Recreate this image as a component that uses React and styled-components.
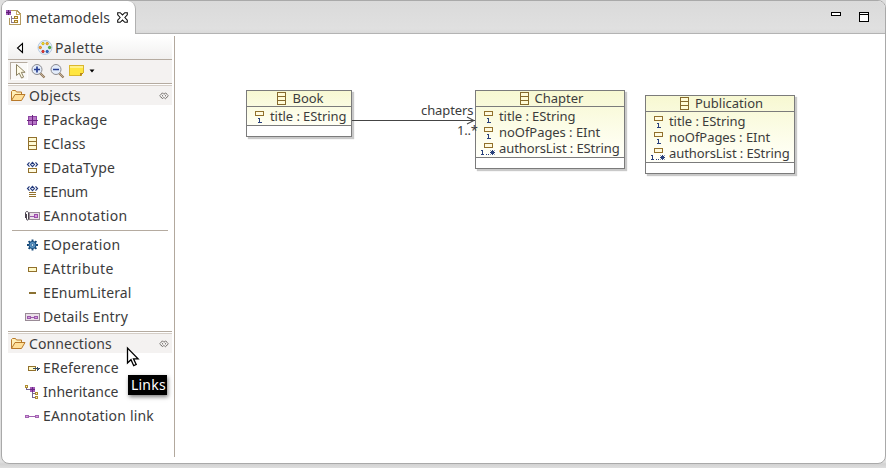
import React from "react";
import styled, { createGlobalStyle } from "styled-components";

const Global = createGlobalStyle`
  * { box-sizing: border-box; }
  body { margin: 0; background: #dedede; overflow: hidden; font-family: "Noto Sans", "Open Sans", sans-serif; color: #3c3c3c; }
  svg { display: block; flex: none; }
`;
const Page = styled.div`
  width: 886px;
  height: 468px;
  padding-left: 1px;
  background: linear-gradient(#dfdfdf 0, #dfdfdf 462px, #d2d2d2 464px, #dedede 468px);
`;
const Frame = styled.div`
  height: 464px;
  display: flex;
  flex-direction: column;
  background: #fff;
  border: 1px solid #a9a9a9;
  border-radius: 8px;
  overflow: hidden;
`;
const TabBar = styled.div`
  height: 33px;
  flex: none;
  display: flex;
  background: linear-gradient(#dadada, #e0e0e0 85%, #d8d8d8);
`;
const Tab = styled.div`
  width: 134px;
  height: 33px;
  display: flex;
  align-items: center;
  padding: 0 0 0 4px;
  background: #fff;
  border-right: 1px solid #b0b0b0;
  border-top-right-radius: 8px;
`;
const BarRest = styled.div`
  flex: 1;
  display: flex;
  justify-content: flex-end;
  gap: 18px;
  padding: 11px 16px 0 0;
  border-bottom: 1px solid #b3b3b3;
`;
const Label = styled.span`
  font-size: ${(p) => p.$size || 14}px;
  line-height: ${(p) => p.$lh || 20}px;
  letter-spacing: ${(p) => p.$ls || 0}px;
  white-space: pre;
`;
const TabLabel = styled(Label)`
  width: 95px;
  padding-left: 4px;
`;
const Body = styled.div`
  flex: 1;
  display: flex;
`;
const Palette = styled.aside`
  width: 169px;
  height: 421px;
  margin: 2px 0 0 4px;
  padding: 0 2px 0 2px;
  border-right: 1px solid #b2a89d;
`;
const PaletteHead = styled.div`
  height: 24px;
  display: flex;
  align-items: center;
  gap: 8px;
  padding-left: 5px;
  background: linear-gradient(#fff, #f1f0ef);
  border-bottom: 1px solid #b5aba0;
`;
const HeadTitle = styled.div`
  display: flex;
  align-items: center;
  gap: 2px;
`;
const Toolbar = styled.div`
  height: 24px;
  display: flex;
  align-items: center;
  background: #f4f2f1;
  border-bottom: 1px solid #b5aba0;
  padding: 0 0 1px 2px;
`;
const Tool = styled.div`
  width: ${(p) => p.$w}px;
  height: 18px;
  display: flex;
  align-items: center;
  justify-content: center;
  ${(p) => p.$pressed && `
    background: #faf9f8;
    border: 1px solid #b5aba0;
    border-right-color: #fff;
    border-bottom-color: #fff;
  `}
`;
const DrawerHead = styled.div`
  height: ${(p) => (p.$ruled ? 22 : 21)}px;
  display: flex;
  align-items: center;
  background: #f4f2f1;
  border-top: ${(p) => (p.$ruled ? "1px solid #b5aba0" : "0")};
  box-shadow: inset 0 1px #fff, inset 0 2px #d5cec7;
  padding: 2px 3px 0 2px;
  margin-top: ${(p) => p.$gap || 0}px;
`;
const DrawerLabel = styled(Label)`
  flex: 1;
  padding-left: 3px;
`;
const Items = styled.div`
  padding-top: ${(p) => p.$top}px;
`;
const Item = styled.div`
  height: 24px;
  display: flex;
  align-items: center;
  padding-left: 16px;
`;
const IconCell = styled.div`
  width: 16px;
  margin-right: 3px;
`;
const Rule = styled.div`
  height: 1px;
  background: #b5aba0;
  margin: 2px 4px 2px 4px;
`;
const Canvas = styled.main`
  flex: 1;
  position: relative;
`;
const Node = styled.section`
  position: absolute;
  left: ${(p) => p.$x}px;
  top: ${(p) => p.$y}px;
  width: ${(p) => p.$w}px;
  height: ${(p) => p.$h}px;
  display: flex;
  flex-direction: column;
  border: 1px solid #7b7b7b;
  background: linear-gradient(#f7f8d2, #fffff4 75%, #fff);
  box-shadow: 2px 2px 1px #c9c9c9;
`;
const NodeHead = styled.header`
  height: 16px;
  flex: none;
  display: flex;
  align-items: center;
  justify-content: center;
  gap: 6px;
  padding-left: 3px;
  border-bottom: 1px solid #7b7b7b;
`;
const NodeName = styled(Label)`
  margin-top: -1px;
`;
const Attrs = styled.div`
  flex: 1;
  padding: 1px 0 0 4px;
`;
const Attr = styled.div`
  height: 16px;
  display: flex;
  align-items: center;
  gap: 3px;
`;
const Ops = styled.footer`
  height: 11px;
  border-top: 1px solid #7b7b7b;
  background: #fff;
`;
const Edge = styled.svg`
  position: absolute;
  left: 177px;
  top: 79px;
`;
const EdgeLabel = styled(Label)`
  position: absolute;
  left: ${(p) => p.$x}px;
  top: ${(p) => p.$y}px;
`;
const Pointer = styled.svg`
  position: absolute;
  left: 126px;
  top: 346px;
`;
const Tip = styled.div`
  position: absolute;
  left: 128px;
  top: 375px;
  width: 39px;
  height: 20px;
  display: flex;
  align-items: center;
  padding: 0 0 1px 3px;
  background: #000;
  color: #fff;
  box-shadow: 1px 2px 4px rgba(0, 0, 0, 0.5);
`;

const Svg = ({ w = 16, h = 16, smooth, children }) => (
  <svg width={w} height={h} viewBox={`0 0 ${w} ${h}`} fill="none" shapeRendering={smooth ? "auto" : "crispEdges"}>{children}</svg>
);
const DocIcon = () => (
  <Svg>
    <path d="M5 .5h6l3 3v11h-11v-7" fill="#fff" stroke="#b39a62" />
    <path d="M10.500 .5v4h4" stroke="#c7a961" />
    <path d="M5.500 6v6.500h3M5.500 8.500h3" stroke="#8b7b91" />
    <rect x="8.500" y="6.500" width="3" height="2" fill="#fff2bb" stroke="#a77f27" />
    <rect x="8.500" y="10.500" width="3" height="2" fill="#fff2bb" stroke="#a77f27" />
    <rect x="0" y="0" width="5" height="5" fill="#a35bb8" />
    <path d="M0 2.500h5M2.500 0v5" stroke="#5e1f78" />
  </Svg>
);
const CloseIcon = () => (
  <Svg w={11} h={11} smooth>
    <path d="M.7.7H3.200L5.500 3 7.800.7h2.500v2.200L7.900 5.500l2.400 2.600v2.200H7.800L5.500 8l-2.300 2.300H.7V8.100l2.400-2.600L.7 2.900Z" stroke="#111" strokeWidth="1.100" />
  </Svg>
);
const MinIcon = () => <Svg w={10} h={4}><rect x=".5" y=".5" width="9" height="3" fill="#fff" stroke="#000" /></Svg>;
const MaxIcon = () => <Svg w={10} h={10}><path d="M.5.5h9v9h-9zM1 2.500h8" fill="#fff" stroke="#000" /></Svg>;
const BackIcon = () => <Svg w={16} h={14} smooth><path d="M9.500 2.500v9L4.500 7Z" fill="#fff" stroke="#000" strokeWidth="1.100" /></Svg>;
const PaletteIcon = () => (
  <Svg smooth>
    <circle cx="8" cy="7.500" r="7" fill="#e3edf8" stroke="#b7cbe0" />
    <g strokeWidth=".7">
      <circle cx="6" cy="3.600" r="1.200" fill="#ffe82c" stroke="#bca000" />
      <circle cx="10.200" cy="3.600" r="1.200" fill="#f6bc31" stroke="#c27b00" />
      <circle cx="3.300" cy="7.500" r="1.200" fill="#ffa52a" stroke="#c66d00" />
      <circle cx="12.600" cy="7.500" r="1.200" fill="#62bf38" stroke="#27831b" />
      <circle cx="6" cy="11.500" r="1.200" fill="#ef4037" stroke="#ad1917" />
      <circle cx="10.200" cy="11.500" r="1.200" fill="#326cce" stroke="#174391" />
    </g>
  </Svg>
);
const SelectIcon = () => (
  <Svg w={14} smooth>
    <path d="M4.500 1.500v11l2.700-2.400 2.400 5 2-1-2.300-4.800h3.800Z" fill="#fffbe7" stroke="#8b8162" strokeWidth="1" />
  </Svg>
);
const ZoomIcon = ({ plus }) => (
  <Svg smooth>
    <path d="m10 10 4.500 4.500" stroke="#8d7458" strokeWidth="2.200" />
    <path d="m10 10 4.500 4.500" stroke="#d1bea2" strokeWidth=".8" />
    <circle cx="7" cy="6.500" r="5" fill="#e3ecfa" stroke="#8c8b90" />
    <path d={plus ? "M4 6.500h6M7 3.500v6" : "M4 6.500h6"} stroke="#273e91" strokeWidth="1.700" />
  </Svg>
);
const NoteIcon = () => (
  <Svg>
    <path d="M1.500 2.500h14v7l-2.500 3H1.500Z" fill="#ffe640" stroke="#dab72e" />
    <path d="M2 3h13v2H2z" fill="#fff18b" />
    <path d="M12 13v-3h4z" fill="#b98a22" />
  </Svg>
);
const DownIcon = () => <Svg w={6} h={4} smooth><path d="M.5.5h5L3 3.500Z" fill="#000" /></Svg>;
const FolderIcon = () => (
  <Svg smooth>
    <path d="M1.500 12.500v-9l1-1h3l1 1.500h5v2.500" fill="#fff0b8" stroke="#b8792a" />
    <path d="M1.500 12.500 5 6.500h10L11.500 12.500Z" fill="#ffe09a" stroke="#b8792a" />
  </Svg>
);
const PinIcon = () => (
  <Svg w={10} h={8} smooth>
    <path d="M3.500.8.7 3.800l2.800 3 1.300-1.500L6.500 6.800l2.800-3-2.800-3-1.600 1.500ZM3 3.800h1M6 3.800h1" stroke="#5a5652" strokeWidth="1" strokeDasharray="1.500 .4" />
  </Svg>
);
const PackageIcon = () => (
  <Svg>
    <rect x="4" y="4" width="9" height="9" fill="#8d45a2" />
    <path d="M5 5h3v3H5zM9 5h3v3H9zM5 9h3v3H5zM9 9h3v3H9z" fill="#b777c7" />
    <path d="M8.500 3v11M3 8.500h11" stroke="#6e2383" />
  </Svg>
);
const ClassIcon = () => (
  <Svg w={9} h={13}>
    <path d="M.5.5h8v12h-8zM.5 4.500h8M.5 8.500h8" fill="#fffbd6" stroke="#85692c" />
  </Svg>
);
const ClassItemIcon = () => <Svg><path d="M4.500 1.500h8v12h-8zM4.500 5.500h8M4.500 9.500h8" fill="#fffbd6" stroke="#91702c" /></Svg>;
const EyeMark = () => (
  <g stroke="#263c7d" shapeRendering="auto">
    <path d="m5.500 2.300-2 2.200 2 2.200M11.500 2.300l2 2.200-2 2.200" strokeWidth="1.200" />
    <path d="m8.500 2.300 2 2.200-2 2.200-2-2.200Z" fill="#dfe6f8" strokeWidth="1.100" />
  </g>
);
const TypeIcon = () => <Svg><EyeMark /><path d="M4.500 8.500h8v4h-8z" fill="#fffbe2" stroke="#91702c" /></Svg>;
const EnumIcon = () => <Svg><EyeMark /><path d="M5 8.500h7M5 10.500h7M5 12.500h7" stroke="#91702c" /></Svg>;
const AnnotationIcon = () => (
  <Svg>
    <path d="M5 4.500h10.500v7H5z" fill="#eadfe8" stroke="#998b96" />
    <path d="M6 8.500h5" stroke="#9b59ac" />
    <path d="M10.500 6.500h3v3h-3z" stroke="#9b4caa" fill="#d89adb" />
    <path d="M1.500 10V5c0-2 3-2 3 0v6c0 1.500-2 1.500-2 0V6" stroke="#4c4550" shapeRendering="auto" />
  </Svg>
);
const DetailsIcon = () => (
  <Svg>
    <path d="M1.500 4.500h14v7h-14z" fill="#eadfe8" stroke="#998b96" />
    <path d="M6 8.500h5" stroke="#9b59ac" />
    <path d="M3.500 7.500h3v2h-3zM10.500 7.500h3v2h-3z" fill="#d89adb" stroke="#9b59ac" />
  </Svg>
);
const GearIcon = () => (
  <Svg smooth>
    <path d="M8.500 2.500v11M3 8h11M4.600 4.100l7.800 7.800M12.400 4.100l-7.800 7.800" stroke="#164a7a" strokeWidth="1.900" />
    <circle cx="8.500" cy="8" r="3.600" fill="#5994c5" stroke="#164a7a" />
    <circle cx="8.500" cy="8" r="1.300" fill="#d8eefa" stroke="#164a7a" strokeWidth=".6" />
  </Svg>
);
const AttributeIcon = () => <Svg><rect x="4.500" y="6.500" width="8" height="4" fill="#fffac9" stroke="#91702c" /></Svg>;
const LiteralIcon = () => <Svg><path d="M5 7h7v2H5z" fill="#8a7132" /></Svg>;
const ReferenceIcon = () => (
  <Svg>
    <rect x="4.500" y="6.500" width="7" height="4" fill="#fffac9" stroke="#91702c" />
    <path d="M9 8.500h7M13.500 6.500v4M14.500 7.500v2" stroke="#384e65" />
  </Svg>
);
const InheritanceIcon = () => (
  <Svg>
    <path d="M2.500 3v2.500h3M8.500 7v6.500H11M8.500 9.500H11" stroke="#746391" />
    <path d="M1.500 1.500h2v2h-2zM11.500 8.500h2v2h-2zM11.500 12.500h2v2h-2z" fill="#fff8bd" stroke="#ae8b31" />
    <path d="M6 3h5v5H6z" fill="#a35bb8" />
    <path d="M6 5.500h5M8.500 3v5" stroke="#6b2685" />
  </Svg>
);
const LinkIcon = () => (
  <Svg>
    <g stroke="#a263b2">
      <path d="M4 8.500h8" />
      <path d="M1.500 7.500h3v2h-3zM11.500 7.500h3v2h-3z" fill="#d8a0dd" />
    </g>
  </Svg>
);
const CardIcon = ({ many }) => (
  <Svg>
    <rect x="4.500" y="3.500" width="8" height="4" fill="#fffbe0" stroke="#91702c" />
    {many ? (
      <g stroke="#28407d">
        <path d="M2.500 10v5M1 10.500h1M1 14.500h3M6 14.500h1M8 14.500h1" />
        <path d="M10 12.500h5M12.500 10v5" />
        <path d="m10.500 10.500 4 4m0-4-4 4" shapeRendering="auto" />
      </g>
    ) : <path d="M8.500 10v5M7 10.500h2M7 14.500h4" stroke="#28407d" />}
  </Svg>
);

const objects = [
  ["EPackage", PackageIcon, 0.2], ["EClass", ClassItemIcon, 0.2], ["EDataType", TypeIcon, 0.25],
  ["EEnum", EnumIcon, -0.2], ["EAnnotation", AnnotationIcon, 0.3],
];
const members = [
  ["EOperation", GearIcon, 0.3], ["EAttribute", AttributeIcon, 0.45],
  ["EEnumLiteral", LiteralIcon, 0.15], ["Details Entry", DetailsIcon, 0.15],
];
const connections = [["EReference", ReferenceIcon, 0.2], ["Inheritance", InheritanceIcon, 0], ["EAnnotation link", LinkIcon, 0.17]];

const ItemList = ({ items, top }) => (
  <Items $top={top}>
    {items.map(([name, Icon, ls]) => (
      <Item key={name}><IconCell><Icon /></IconCell><Label $ls={ls}>{name}</Label></Item>
    ))}
  </Items>
);

const fields = [["title : EString", false, -0.07], ["noOfPages : EInt", false, -0.05], ["authorsList : EString", true, -0.1]];
const ClassNode = ({ name, x, y, w, h, rows }) => (
  <Node $x={x} $y={y} $w={w} $h={h}>
    <NodeHead><ClassIcon /><NodeName $size={13} $lh={15}>{name}</NodeName></NodeHead>
    <Attrs>
      {rows.map(([text, many, s]) => (
        <Attr key={text}><CardIcon many={many} /><Label $size={13} $lh={16} $ls={s}>{text}</Label></Attr>
      ))}
    </Attrs>
    <Ops />
  </Node>
);

export default function App() {
  return (
    <Page>
      <Global />
      <Frame>
        <TabBar>
          <Tab><DocIcon /><TabLabel $ls={0.2}>metamodels</TabLabel><CloseIcon /></Tab>
          <BarRest><MinIcon /><MaxIcon /></BarRest>
        </TabBar>
        <Body>
          <Palette>
            <PaletteHead>
              <BackIcon />
              <HeadTitle><PaletteIcon /><Label $ls={0.4}>Palette</Label></HeadTitle>
            </PaletteHead>
            <Toolbar>
              <Tool $w={18} $pressed><SelectIcon /></Tool>
              <Tool $w={20}><ZoomIcon plus /></Tool>
              <Tool $w={18}><ZoomIcon /></Tool>
              <Tool $w={20}><NoteIcon /></Tool>
              <Tool $w={12}><DownIcon /></Tool>
            </Toolbar>
            <DrawerHead><FolderIcon /><DrawerLabel $ls={0.3}>Objects</DrawerLabel><PinIcon /></DrawerHead>
            <ItemList items={objects} top={3} />
            <Rule />
            <ItemList items={members} top={0} />
            <DrawerHead $ruled $gap={2}><FolderIcon /><DrawerLabel $ls={0.1}>Connections</DrawerLabel><PinIcon /></DrawerHead>
            <ItemList items={connections} top={3} />
          </Palette>
          <Canvas>
            <ClassNode name="Book" x={71} y={56} w={106} h={47} rows={fields.slice(0, 1)} />
            <ClassNode name="Chapter" x={300} y={56} w={150} h={79} rows={fields} />
            <ClassNode name="Publication" x={470} y={61} w={150} h={79} rows={fields} />
            <Edge width="123" height="14"><path d="M0 7.500h123M115 4l7 3.500-7 3.500" fill="none" stroke="#444" strokeWidth="1.100" /></Edge>
            <EdgeLabel $size={13} $lh={16} $ls={-0.1} $x={246} $y={68}>chapters</EdgeLabel>
            <EdgeLabel $size={13} $lh={16} $ls={-0.2} $x={282} $y={88}>1..*</EdgeLabel>
          </Canvas>
        </Body>
      </Frame>
      <Pointer width="14" height="22"><path d="M1.500 2v15l3.500-3.300 2.700 6 2.500-1.200-2.700-5.700h4.600Z" fill="#fff" stroke="#000" strokeWidth="1.300" /></Pointer>
      <Tip><Label $ls={0.2}>Links</Label></Tip>
    </Page>
  );
}
